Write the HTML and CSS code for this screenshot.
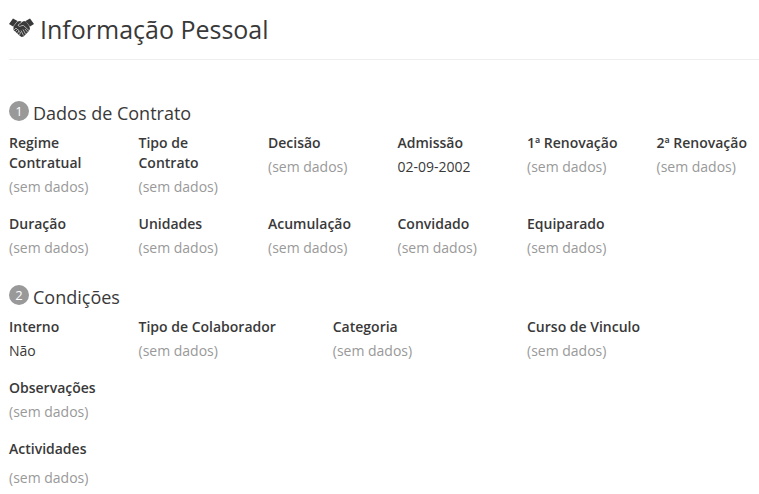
FILE: index.html
```html
<!DOCTYPE html>
<html lang="pt">
<head>
    <meta charset="UTF-8">
    <meta name="viewport" content="width=device-width, initial-scale=1.0">
    <title>Informação Pessoal</title>
    <link rel="stylesheet" href="styles.css">
</head>
<body>
    <header class="page-header">
        <svg class="page-icon" viewBox="0 0 50 40" aria-hidden="true">
            <path class="fill" d="M0 12 L8 1 L17 6 L8 17 Z M50 12 L42 1 L33 6 L42 17 Z"/>
            <path class="fill" d="M9 17 L17 7 L22 6 L26 8 L30 6 L34 7 L41 17 L42 22 L39 27 L29 37 L25 38 L21 35 L9 24 Z"/>
            <path class="line" d="M26 8 L18 14 Q19 19 26 15 L29 15 L40 25 M32 22 L37 28 M28 23 L33 32 M24 25 L29 35"/>
            <path class="line" d="M10 24 L14 20 L17 23 L13 27 M17 23 L20 25 L17 31 M20 27 L23 29 L21 34"/>
        </svg>
        <h1>Informação Pessoal</h1>
    </header>

    <main class="content">
        <section>
            <h2><span class="badge">1</span> Dados de Contrato</h2>
            <dl class="row">
                <div class="col-2"><dt>Regime Contratual</dt><dd class="empty">(sem dados)</dd></div>
                <div class="col-2"><dt>Tipo de Contrato</dt><dd class="empty">(sem dados)</dd></div>
                <div class="col-2"><dt>Decisão</dt><dd class="empty">(sem dados)</dd></div>
                <div class="col-2"><dt>Admissão</dt><dd>02-09-2002</dd></div>
                <div class="col-2"><dt>1ª Renovação</dt><dd class="empty">(sem dados)</dd></div>
                <div class="col-2"><dt>2ª Renovação</dt><dd class="empty">(sem dados)</dd></div>
                <div class="col-2"><dt>Duração</dt><dd class="empty">(sem dados)</dd></div>
                <div class="col-2"><dt>Unidades</dt><dd class="empty">(sem dados)</dd></div>
                <div class="col-2"><dt>Acumulação</dt><dd class="empty">(sem dados)</dd></div>
                <div class="col-2"><dt>Convidado</dt><dd class="empty">(sem dados)</dd></div>
                <div class="col-2"><dt>Equiparado</dt><dd class="empty">(sem dados)</dd></div>
            </dl>
        </section>

        <section>
            <h2><span class="badge">2</span> Condições</h2>
            <dl class="row">
                <div class="col-2"><dt>Interno</dt><dd>Não</dd></div>
                <div class="col-3"><dt>Tipo de Colaborador</dt><dd class="empty">(sem dados)</dd></div>
                <div class="col-3"><dt>Categoria</dt><dd class="empty">(sem dados)</dd></div>
                <div class="col-4"><dt>Curso de Vinculo</dt><dd class="empty">(sem dados)</dd></div>
                <div class="col-12"><dt>Observações</dt><dd class="empty">(sem dados)</dd></div>
                <div class="col-12 activities"><dt>Actividades</dt><dd class="empty">(sem dados)</dd></div>
            </dl>
        </section>
    </main>
</body>
</html>
```

FILE: styles.css
```css
* {
    box-sizing: border-box;
}
body {
    margin: 0;
    font-family: "Open Sans", sans-serif;
    font-size: 14px;
    line-height: 20px;
    color: #393939;
    background-color: #fff;
}
.page-header {
    display: flex;
    align-items: center;
    gap: 6px;
    margin-left: 9px;
    padding: 11px 0 12px;
    border-bottom: 1px solid #eee;
}
.page-icon {
    width: 25px;
    height: 20px;
    margin-bottom: 2px;
}
.page-icon .fill {
    fill: #393939;
}
.page-icon .line {
    fill: none;
    stroke: #ddd;
    stroke-width: 1.4;
}
h1 {
    margin: 0;
    font-size: 25px;
    font-weight: 400;
    line-height: 36px;
}
.content {
    padding: 41px 3px 6px 9px;
}
h2 {
    display: flex;
    gap: 4px;
    margin: 0 0 8px;
    font-size: 18px;
    font-weight: 400;
    line-height: 24px;
}
.badge {
    width: 20px;
    height: 20px;
    border-radius: 50%;
    font-size: 13px;
    line-height: 20px;
    text-align: center;
    color: #fff;
    background-color: #999;
}
.row {
    display: grid;
    grid-template-columns: repeat(12, minmax(0, 1fr));
    gap: 17px 30px;
    margin: 0 0 27px;
}
.col-2 {
    grid-column: span 2;
}
.col-3 {
    grid-column: span 3;
}
.col-4 {
    grid-column: span 4;
}
.col-12 {
    grid-column: span 12;
}
dt {
    font-weight: 600;
}
dd {
    margin: 4px 0 0;
}
.empty {
    color: #999;
}
.activities dd {
    margin-top: 9px;
}
section:last-child .row {
    margin-bottom: 0;
}
```
